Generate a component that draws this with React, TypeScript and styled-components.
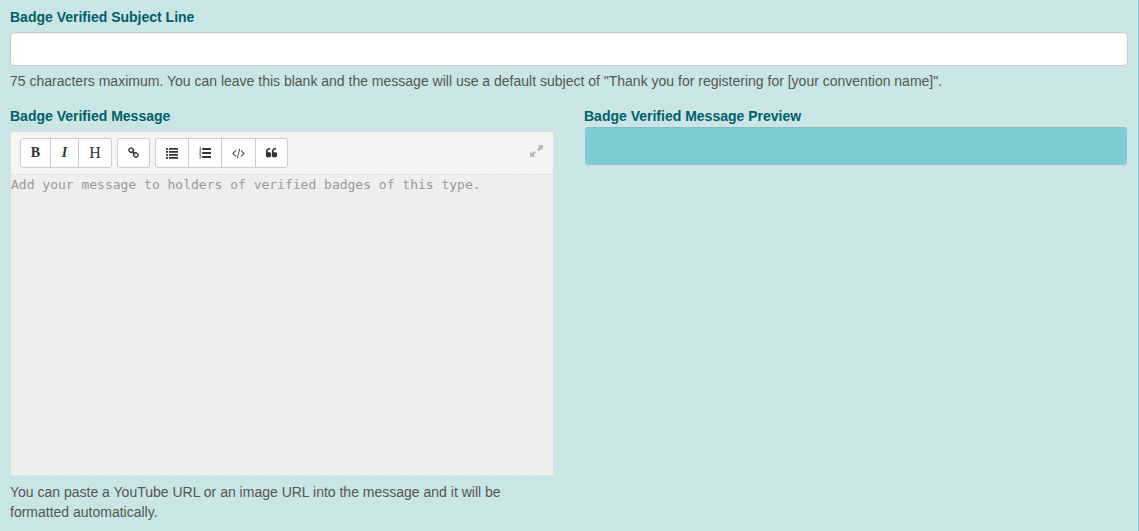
import React from "react";
import styled, { createGlobalStyle } from "styled-components";

const GlobalStyle = createGlobalStyle`
  *, *::before, *::after { box-sizing: border-box; }
  body {
    margin: 0;
    background: #cae5e5;
    color: #555;
    font: 14px/20px "Liberation Sans", Arial, sans-serif;
  }
`;

const Panel = styled.form`
  min-height: 100vh;
  padding: 7px 10px 9px;
  border-right: 1px solid #7eccd3;
  background: #cae5e5;
`;

const Field = styled.div`
  margin-bottom: 15px;
`;

const Label = styled.label`
  display: block;
  color: #006068;
  font-weight: bold;
`;

const SubjectInput = styled.input`
  display: block;
  width: 100%;
  height: 34px;
  margin: 5px 0;
  padding: 6px 12px;
  border: 1px solid #ccc;
  border-radius: 4px;
  background: #fff;
  box-shadow: inset 0 1px 1px rgba(0, 0, 0, 0.075);
  color: #555;
  font: inherit;
`;

const Help = styled.p`
  margin: 0;
`;

const Columns = styled.div`
  display: grid;
  grid-template-columns: 1fr 1fr;
  gap: 30px;
  align-items: start;
`;

const Editor = styled.div`
  margin: 5px 0 6px;
  border: 1px solid #ddd;
  border-bottom: 0;
  background: #eee;
`;

const Toolbar = styled.div`
  display: flex;
  gap: 5px;
  padding: 6px 9px;
  background: #f5f5f5;
`;

const ButtonGroup = styled.div`
  display: flex;
`;

const ToolButton = styled.button`
  display: flex;
  align-items: center;
  justify-content: center;
  height: 30px;
  padding: 0 10px;
  border: 1px solid #ccc;
  background: #fff;
  color: #333;

  & + & { margin-left: -1px; }
  &:first-child { border-radius: 3px 0 0 3px; }
  &:last-child { border-radius: 0 3px 3px 0; }
  &:only-child { border-radius: 3px; }
`;

const Letter = styled.span<{ $width: number; $bold?: boolean; $italic?: boolean }>`
  display: flex;
  justify-content: center;
  width: ${(p) => p.$width}px;
  font: 14px/18px "Liberation Serif", "Times New Roman", serif;
  font-size: ${(p) => (p.$bold || p.$italic ? 14 : 16)}px;
  font-weight: ${(p) => (p.$bold || p.$italic ? "bold" : "normal")};
  font-style: ${(p) => (p.$italic ? "italic" : "normal")};
`;

const ExpandButton = styled.button`
  display: flex;
  align-items: center;
  margin-left: auto;
  padding: 0;
  border: 0;
  background: none;
  color: #bbb;
  height: 26px;
`;

const MessageArea = styled.textarea`
  display: block;
  width: 100%;
  height: 302px;
  padding: 0;
  border: 0;
  border-top: 1px dashed #ddd;
  border-bottom: 1px dashed #ddd;
  background: #eee;
  color: #555;
  font: 13px/20px Consolas, "DejaVu Sans Mono", monospace;
  outline: none;
  resize: none;

  &::placeholder { color: #999; opacity: 1; }
`;

const Heading = styled.h2`
  margin: 0;
  color: #006068;
  font: inherit;
  font-weight: bold;
`;

const Preview = styled.div`
  min-height: 40px;
  border: 1px solid #dedede;
  border-radius: 4px;
  background: #7eccd3;
  box-shadow: inset 0 1px 1px rgba(0, 0, 0, 0.05);
`;

const LinkIcon = () => (
  <svg width="11" height="12" viewBox="0 0 1664 1792" fill="currentColor" aria-hidden="true">
    <path d="M1456 1216q0-40-28-68l-208-208q-28-28-68-28-42 0-72 32 3 3 19 18.500t21.500 21.500 15 19 13 25.500 3.500 27.500q0 40-28 68t-68 28q-15 0-27.500-3.500t-25.500-13-19-15-21.500-21.500-18.500-19q-33 31-33 73 0 40 28 68l206 207q27 27 68 27 40 0 68-26l147-146q28-28 28-67zm-703-705q0-40-28-68l-206-207q-28-28-68-28-39 0-68 27l-147 146q-28 28-28 67 0 40 28 68l208 208q27 27 68 27 42 0 72-31-3-3-19-18.500t-21.500-21.500-15-19-13-25.500-3.500-27.500q0-40 28-68t68-28q15 0 27.500 3.500t25.500 13 19 15 21.500 21.500 18.500 19q33-31 33-73zm895 705q0 120-85 203l-147 146q-83 83-203 83-121 0-204-85l-206-207q-83-83-83-203 0-123 88-209l-88-88q-86 88-208 88-120 0-204-84l-208-208q-84-84-84-204t85-203l147-146q83-83 203-83 121 0 204 85l206 207q83 83 83 203 0 123-88 209l88 88q86-88 208-88 120 0 204 84l208 208q84 84 84 204z" />
  </svg>
);

const ListIcon = () => (
  <svg width="12" height="12" viewBox="0 0 12 12" fill="currentColor" aria-hidden="true">
    {[1, 4, 7, 10].map((y) => (
      <path key={y} d={`M0 ${y}h2v1.800h-2zM3 ${y}h9v1.800h-9z`} />
    ))}
  </svg>
);

const OrderedListIcon = () => (
  <svg width="12" height="12" viewBox="0 0 12 12" fill="currentColor" aria-hidden="true">
    <path d="M3.200 1h8.800v2h-8.800zM3.200 5h8.800v2h-8.800zM3.200 9h8.800v2h-8.800z" />
    <path
      d="M.6.7l.8-.5v3M.5 3.200h1.800M.4 4.800q1.500-.8 1.500.2q0 .6-1.500 1.900h1.800M.4 8.500h1.600l-.8 1.200q1 0 .9.900q-.2.900-1.700.5"
      fill="none"
      stroke="currentColor"
      strokeWidth=".7"
    />
  </svg>
);

const CodeIcon = () => (
  <svg width="13" height="12" viewBox="0 0 1920 1792" fill="currentColor" aria-hidden="true">
    <path d="M617 1399l-50 50q-10 10-23 10t-23-10l-466-466q-10-10-10-23t10-23l466-466q10-10 23-10t23 10l50 50q10 10 10 23t-10 23l-393 393 393 393q10 10 10 23t-10 23zm591-1067l-373 1291q-4 13-15.500 19.500t-23.500 2.500l-62-17q-13-4-19.500-15.500t-2.500-24.500l373-1291q4-13 15.500-19.500t23.500-2.500l62 17q13 4 19.500 15.500t2.500 24.500zm657 651l-466 466q-10 10-23 10t-23-10l-50-50q-10-10-10-23t10-23l393-393-393-393q-10-10-10-23t10-23l50-50q10-10 23-10t23 10l466 466q10 10 10 23t-10 23z" />
  </svg>
);

const QuoteIcon = () => (
  <svg width="11" height="12" viewBox="0 0 1664 1792" fill="currentColor" aria-hidden="true">
    <path d="M768 960v384q0 80-56 136t-136 56h-384q-80 0-136-56t-56-136v-704q0-104 40.500-198.500t109.500-163.500 163.500-109.500 198.500-40.500h64q26 0 45 19t19 45v128q0 26-19 45t-45 19h-64q-106 0-181 75t-75 181v32q0 40 28 68t68 28h224q80 0 136 56t56 136zm896 0v384q0 80-56 136t-136 56h-384q-80 0-136-56t-56-136v-704q0-104 40.500-198.500t109.500-163.500 163.500-109.500 198.500-40.500h64q26 0 45 19t19 45v128q0 26-19 45t-45 19h-64q-106 0-181 75t-75 181v32q0 40 28 68t68 28h224q80 0 136 56t56 136z" />
  </svg>
);

const ExpandIcon = () => (
  <svg width="14" height="12" viewBox="0 0 14 12" fill="currentColor" aria-hidden="true">
    <path d="M7.500 0H13v5.200l-1.500-1.400-2.800 2.500-1.900-1.900 2.500-2.700zM0 12V6.800l1.500 1.400 2.800-2.500 1.900 1.900-2.500 2.700L5.500 12z" />
  </svg>
);

export default function App() {
  return (
    <>
      <GlobalStyle />
      <Panel>
        <Field>
          <Label htmlFor="subject">Badge Verified Subject Line</Label>
          <SubjectInput id="subject" type="text" maxLength={75} aria-describedby="subject-help" />
          <Help id="subject-help">
            75 characters maximum. You can leave this blank and the message will use a default
            subject of "Thank you for registering for [your convention name]".
          </Help>
        </Field>
        <Columns>
          <div>
            <Label htmlFor="message">Badge Verified Message</Label>
            <Editor>
              <Toolbar>
                <ButtonGroup>
                  <ToolButton type="button" title="Bold"><Letter $width={9} $bold>B</Letter></ToolButton>
                  <ToolButton type="button" title="Italic"><Letter $width={7} $italic>I</Letter></ToolButton>
                  <ToolButton type="button" title="Heading"><Letter $width={12}>H</Letter></ToolButton>
                </ButtonGroup>
                <ButtonGroup>
                  <ToolButton type="button" aria-label="Link"><LinkIcon /></ToolButton>
                </ButtonGroup>
                <ButtonGroup>
                  <ToolButton type="button" aria-label="Unordered list"><ListIcon /></ToolButton>
                  <ToolButton type="button" aria-label="Ordered list"><OrderedListIcon /></ToolButton>
                  <ToolButton type="button" aria-label="Code"><CodeIcon /></ToolButton>
                  <ToolButton type="button" aria-label="Quote"><QuoteIcon /></ToolButton>
                </ButtonGroup>
                <ExpandButton type="button" aria-label="Fullscreen"><ExpandIcon /></ExpandButton>
              </Toolbar>
              <MessageArea
                id="message"
                aria-describedby="message-help"
                placeholder="Add your message to holders of verified badges of this type."
              />
            </Editor>
            <Help id="message-help">
              You can paste a YouTube URL or an image URL into the message and it will be formatted
              automatically.
            </Help>
          </div>
          <section aria-labelledby="preview-title">
            <Heading id="preview-title">Badge Verified Message Preview</Heading>
            <Preview />
          </section>
        </Columns>
      </Panel>
    </>
  );
}
